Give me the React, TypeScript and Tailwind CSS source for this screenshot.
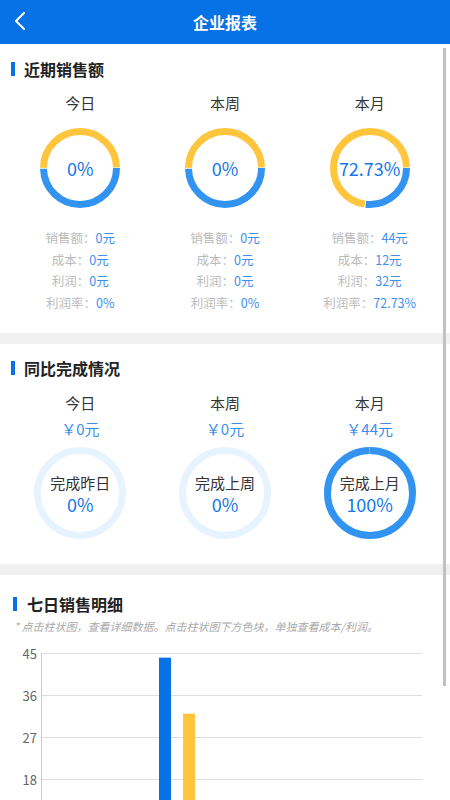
import React from "react"

const FONT = { fontFamily: '"Noto Sans CJK SC", "Noto Sans", sans-serif' }

const periods = [
  { name: "今日", sales: 0, cost: 0, profit: 0, rate: "0%", target: "完成昨日", done: 0 },
  { name: "本周", sales: 0, cost: 0, profit: 0, rate: "0%", target: "完成上周", done: 0 },
  { name: "本月", sales: 44, cost: 12, profit: 32, rate: "72.73%", target: "完成上月", done: 100 },
]

function SectionTitle({ title, wide }: { title: string; wide?: boolean }) {
  return (
    <div className={`flex items-center h-[20px] ${wide ? "pl-[13px] gap-[10px]" : "pl-[11px] gap-[9px]"}`}>
      <span className="w-[4px] h-[14px] bg-[#0672e6]" />
      <span className="text-[16px] font-bold text-[#222]">{title}</span>
    </div>
  )
}

function CostRing({ cost, profit, text }: { cost: number; profit: number; text: string }) {
  const r = 36.5
  const c = 2 * Math.PI * r
  const total = cost + profit
  const bf = total === 0 ? 0.5 : cost / total
  const gap = 1
  return (
    <div className="relative w-[80px] h-[80px]">
      <svg width="80" height="80" viewBox="0 0 80 80">
        <circle
          cx="40"
          cy="40"
          r={r}
          fill="none"
          stroke="#3293f1"
          strokeWidth="7"
          strokeDasharray={`${bf * c - gap} ${c}`}
        />
        <circle
          cx="40"
          cy="40"
          r={r}
          fill="none"
          stroke="#ffc53d"
          strokeWidth="7"
          strokeDasharray={`${(1 - bf) * c - gap} ${c}`}
          strokeDashoffset={-(bf * c)}
        />
      </svg>
      <div className="absolute inset-0 flex items-center justify-center text-[18px] text-[#1677e6]">{text}</div>
    </div>
  )
}

function DoneRing({ done, label }: { done: number; label: string }) {
  const r = 42.5
  const c = 2 * Math.PI * r
  const len = (done / 100) * c
  return (
    <div className="relative w-[92px] h-[92px]">
      <svg width="92" height="92" viewBox="0 0 92 92">
        <circle cx="46" cy="46" r={r} fill="none" stroke="#e7f3ff" strokeWidth="7" />
        {done > 0 && (
          <circle
            cx="46"
            cy="46"
            r={r}
            fill="none"
            stroke="#3293f1"
            strokeWidth="7"
            strokeDasharray={`${len - 0.8} ${c}`}
            transform="rotate(-90 46 46)"
          />
        )}
      </svg>
      <div className="absolute inset-0 flex flex-col items-center justify-center pt-[2px]">
        <span className="text-[15px] leading-[20px] text-[#333]">{label}</span>
        <span className="text-[18px] leading-[22px] text-[#1677e6]">{done}%</span>
      </div>
    </div>
  )
}

function Stat({ label, value }: { label: string; value: string }) {
  return (
    <div className="leading-[21.5px] text-[12.5px]">
      <span className="text-[#bbb]">{label}：</span>
      <span className="text-[#3d90ef]">{value}</span>
    </div>
  )
}

function SalesChart() {
  const lines = [45, 36, 27, 18, 9, 0]
  const top = 19
  const step = 42
  const base = top + step * 5
  const h = (v: number) => (v * step * 5) / 45
  return (
    <svg width="450" height="168" className="block">
      {lines.map((v, i) => (
        <line
          key={v}
          x1="41"
          x2="422"
          y1={top + i * step + 0.5}
          y2={top + i * step + 0.5}
          stroke="#dedede"
          strokeWidth="1"
        />
      ))}
      {lines.slice(0, 4).map((v, i) => (
        <text
          key={v}
          x="37"
          y={top + i * step}
          textAnchor="end"
          dominantBaseline="central"
          fontSize="13"
          fill="#666"
          style={FONT}
        >
          {v}
        </text>
      ))}
      <line x1="41.5" x2="41.5" y1={top} y2={base} stroke="#ccc" />
      <rect x="159" y={base - h(44)} width="12" height={h(44)} fill="#0672e6" />
      <rect x="183" y={base - h(32)} width="12" height={h(32)} fill="#ffc53d" />
    </svg>
  )
}

export default function App() {
  return (
    <div className="relative w-[450px] h-[800px] overflow-hidden flex flex-col bg-white" style={FONT}>
      {/* Header */}
      <div className="relative h-[44px] shrink-0 bg-[#0672e6] flex items-center justify-center">
        <svg className="absolute left-[13px] top-[11px]" width="14" height="20" viewBox="0 0 14 20">
          <path d="M11 2 L3 10 L11 18" fill="none" stroke="#fff" strokeWidth="2" strokeLinecap="round" strokeLinejoin="round" />
        </svg>
        <span className="text-white text-[16px] font-bold">企业报表</span>
      </div>

      <div className="flex-1 overflow-hidden bg-[#f0f0f0]">
        {/* 近期销售额 */}
        <section className="bg-white pt-[15px] pb-[20px]">
          <SectionTitle title="近期销售额" />
          <div className="grid grid-cols-3 px-2 mt-[14px]">
            {periods.map((p) => (
              <div key={p.name} className="flex flex-col items-center">
                <div className="text-[15px] leading-[20px] text-[#333]">{p.name}</div>
                <div className="mt-[15px]">
                  <CostRing cost={p.cost} profit={p.profit} text={p.rate} />
                </div>
                <div className="mt-[19px] flex flex-col items-center">
                  <Stat label="销售额" value={`${p.sales}元`} />
                  <Stat label="成本" value={`${p.cost}元`} />
                  <Stat label="利润" value={`${p.profit}元`} />
                  <Stat label="利润率" value={p.rate} />
                </div>
              </div>
            ))}
          </div>
        </section>

        {/* 同比完成情况 */}
        <section className="bg-white mt-[11px] pt-[14px] pb-[25px]">
          <SectionTitle title="同比完成情况" />
          <div className="grid grid-cols-3 px-2 mt-[15px]">
            {periods.map((p) => (
              <div key={p.name} className="flex flex-col items-center">
                <div className="text-[15px] leading-[20px] text-[#333]">{p.name}</div>
                <div className="mt-[6px] text-[15px] leading-[20px] text-[#3d90ef]">￥{p.sales}元</div>
                <div className="mt-[8px]">
                  <DoneRing done={p.done} label={p.target} />
                </div>
              </div>
            ))}
          </div>
        </section>

        {/* 七日销售明细 */}
        <section className="bg-white mt-[11px] pt-[19px]">
          <SectionTitle title="七日销售明细" wide />
          <p className="mt-[4px] pl-[14px] text-[11px] leading-[16px] italic text-[#aaa]">
            * 点击柱状图，查看详细数据。点击柱状图下方色块，单独查看成本/利润。
          </p>
          <SalesChart />
        </section>
      </div>

      {/* scrollbar thumb */}
      <div className="absolute right-[4px] top-[48px] w-[3px] h-[638px] bg-[#c1c1c1]" />
    </div>
  )
}
